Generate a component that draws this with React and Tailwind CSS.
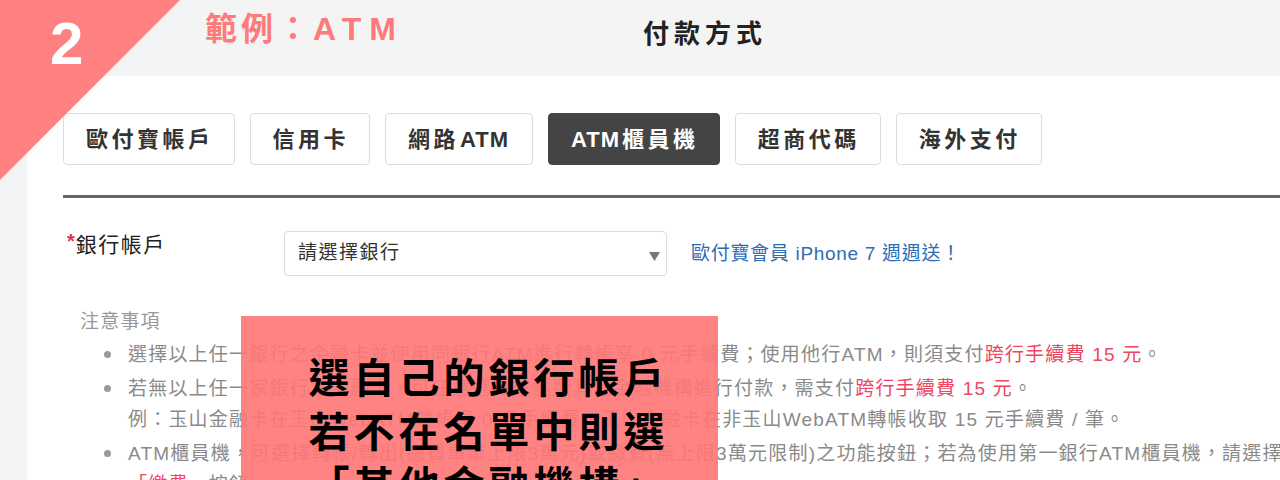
import React from 'react'

const tabs = [['歐付寶帳戶'], ['信用卡'], ['網路', 'ATM'], ['', 'ATM', '櫃員機'], ['超商代碼'], ['海外支付']]

const Red = ({ children }) => <span className="text-[#ee4560]">{children}</span>

const Bullet = ({ children }) => (
  <li className="flex">
    <span className="mt-[12px] ml-[24px] mr-[17px] w-[7px] h-[7px] rounded-full bg-[#9a9a9a] shrink-0" />
    <div>{children}</div>
  </li>
)

export default function App() {
  return (
    <div
      className="relative w-[1280px] h-[480px] overflow-hidden bg-[#f4f4f4]"
      style={{ fontFamily: '"Liberation Sans", "Noto Sans CJK TC", sans-serif' }}
    >
      {/* header */}
      <div className="flex h-[76px]">
        <div className="w-[205px] shrink-0" />
        <div className="w-[438px] shrink-0 mt-[9px] leading-[40px] text-[32px] font-bold text-[#ff7b7b]">
          <span className="tracking-[4px]">範例：</span>
          <span className="tracking-[8px]">ATM</span>
        </div>
        <div className="mt-[17px] leading-[34px] text-[26px] font-bold tracking-[5px] text-[#222]">付款方式</div>
      </div>

      {/* panel */}
      <div className="ml-[27px] h-[404px] bg-white rounded-tl-[4px] pt-[37px] pl-[36px]">
        <div className="flex gap-[15px]">
          {tabs.map(([a, b, c], i) => (
            <div
              key={i}
              className={
                i === 3
                  ? 'h-[52px] pl-[22px] pr-[20px] flex items-center rounded-[4px] border border-[#444] bg-[#444] text-white text-[22px] font-bold tracking-[3.5px]'
                  : 'h-[52px] pl-[22px] pr-[20px] flex items-center rounded-[4px] border border-[#dcdcdc] bg-white text-[#333] text-[22px] font-bold tracking-[3.5px]'
              }
            >
              {a}
              {b && <span className={i === 2 ? 'tracking-[1px] ml-[1px] mr-[3px]' : 'tracking-[1px] mr-[2px]'}>{b}</span>}
              {c}
            </div>
          ))}
        </div>

        <div className="mt-[30px] h-[3px] bg-[#666]" />

        <div className="mt-[33px] flex items-start">
          <div className="w-[221px] shrink-0 pl-[4px] leading-[28px] text-[21px] tracking-[1.5px] text-[#222]">
            <span className="align-top text-[20px] leading-[20px] font-bold text-[#e8304a] tracking-normal mr-[1px]">*</span>銀行帳戶
          </div>
          <div className="w-[383px] h-[45px] border border-[#dcdcdc] rounded-[4px] flex items-center justify-between pl-[13px] pr-[6px] text-[19px] tracking-[1.5px] text-[#333]">
            <span>請選擇銀行</span>
            <svg width="11" height="9" viewBox="0 0 11 9" className="mt-[5px]">
              <polygon points="0,0 11,0 5.5,9" fill="#777" />
            </svg>
          </div>
          <div className="ml-[24px] self-center mt-[2px] text-[19px] tracking-[0.7px] text-[#2f6cb5]">歐付寶會員 iPhone 7 週週送！</div>
        </div>

        <div className="mt-[30px] pl-[17px] text-[19px] tracking-[1.2px] text-[#8a8a8a] whitespace-nowrap">
          <div className="leading-[31px] text-[#999]">注意事項</div>
          <ul className="mt-[2px] flex flex-col gap-[3px] leading-[31px]">
            <Bullet>
              選擇以上任一銀行之金融卡並使用同銀行ATM進行轉帳享 0 元手續費；使用他行ATM，則須支付<Red>跨行手續費 15 元</Red>。
            </Bullet>
            <Bullet>
              <div>若無以上任一家銀行之金融卡，可任意選擇或點選其他金融機構進行付款，需支付<Red>跨行手續費 15 元</Red>。</div>
              <div>例：玉山金融卡在玉山WebATM轉帳享 0 元手續費，玉山金融卡在非玉山WebATM轉帳收取 15 元手續費 / 筆。</div>
            </Bullet>
            <Bullet>
              <div>ATM櫃員機，可選擇轉帳/轉出(繳費單筆上限3萬元)或繳費(無上限3萬元限制)之功能按鈕；若為使用第一銀行ATM櫃員機，請選擇</div>
              <div><Red>「繳費」</Red>按鈕。</div>
            </Bullet>
          </ul>
        </div>
      </div>

      {/* corner badge */}
      <svg width="180" height="180" viewBox="0 0 180 180" className="absolute top-0 left-0">
        <polygon points="0,0 180,0 0,180" fill="#ff7b7b" fillOpacity="0.96" />
      </svg>
      <div className="absolute top-[14px] left-[50px] text-[60px] leading-[60px] font-bold text-white">2</div>

      {/* annotation */}
      <div className="absolute left-[241px] top-[316px] w-[477px] h-[180px] bg-[#ff7676]/90 flex flex-col items-center pt-[36px] pl-[18px] text-[41px] leading-[54px] font-bold tracking-[4px] text-black">
        <div>選自己的銀行帳戶</div>
        <div>若不在名單中則選</div>
        <div>「其他金融機構」</div>
      </div>
    </div>
  )
}
